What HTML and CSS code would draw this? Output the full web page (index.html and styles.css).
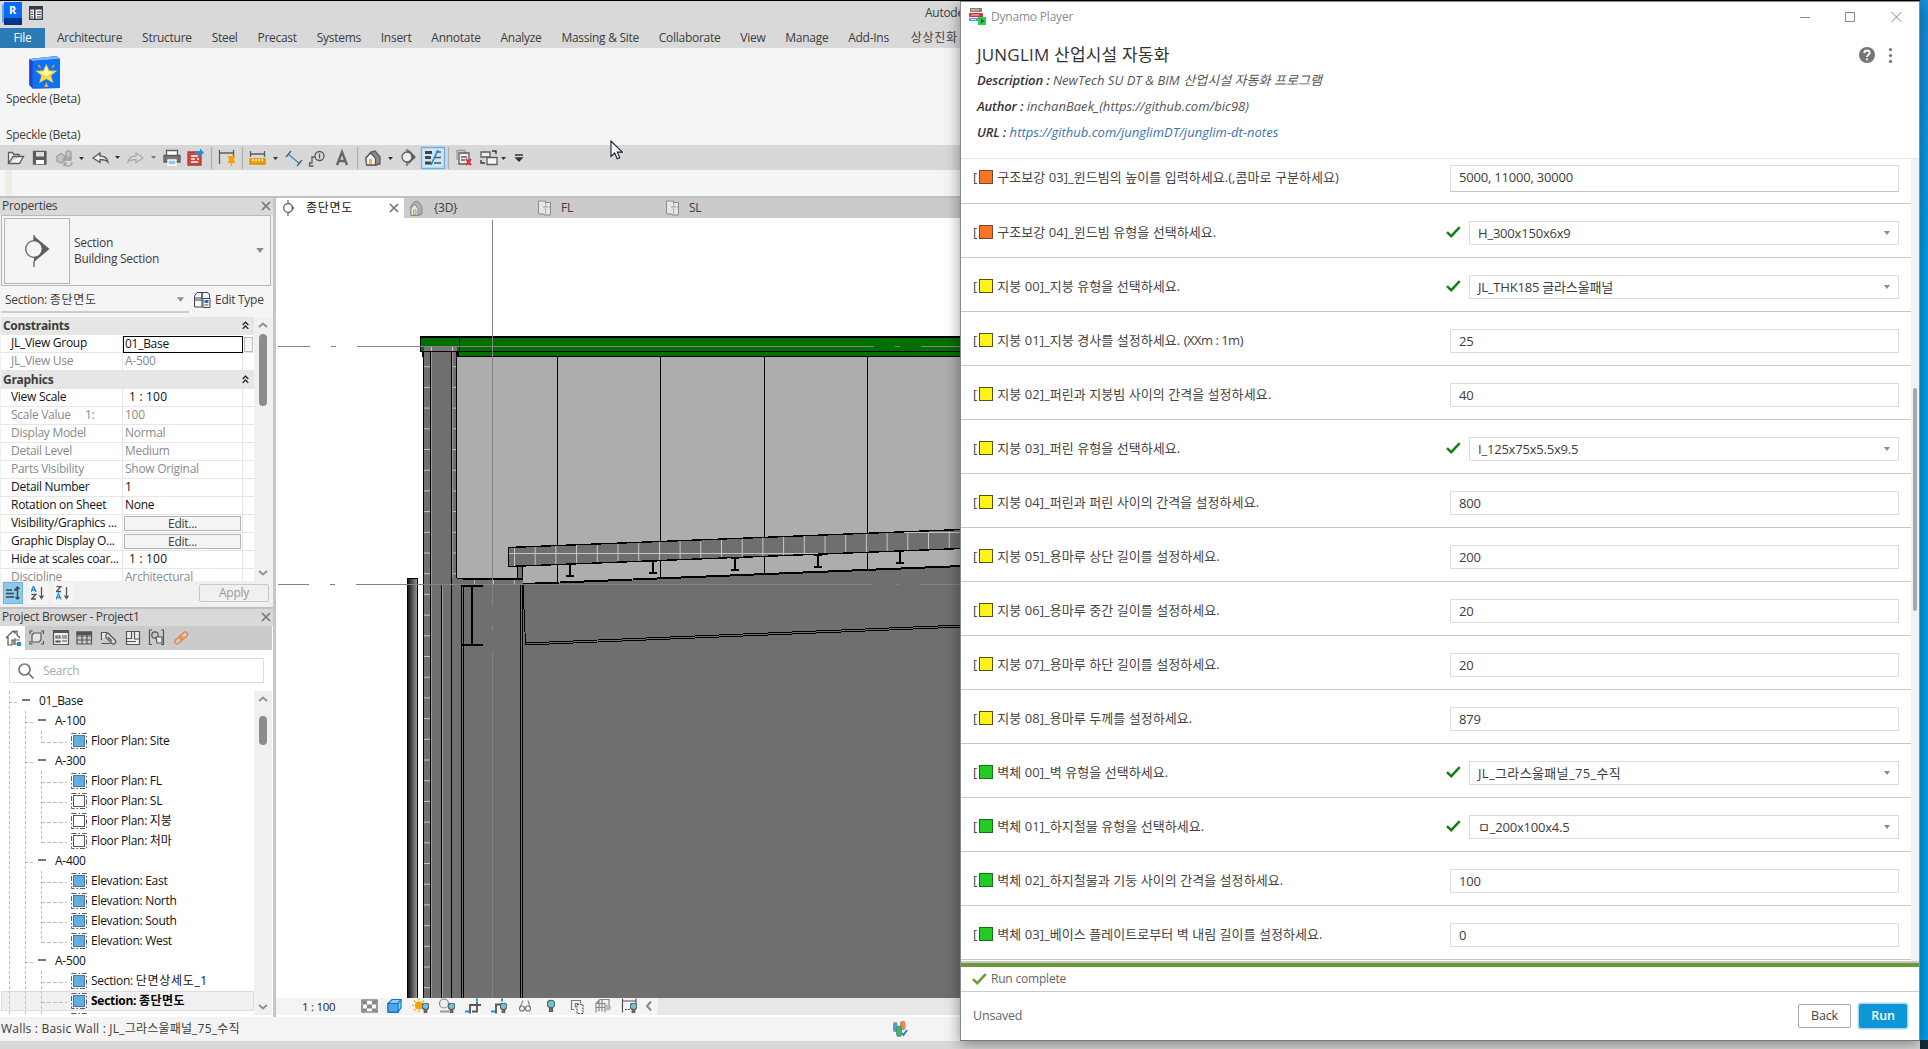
FILE: index.html
```html
<!DOCTYPE html>
<html lang="ko">
<head>
<meta charset="utf-8">
<title>Autodesk Revit - Dynamo Player</title>
<link rel="stylesheet" href="styles.css">
</head>
<body>
<svg width="0" height="0" class="defs">
  <defs>
    <symbol id="check" viewBox="0 0 15 12"><path d="M1 6.2 5.2 10.2 13.7 1.2" fill="none" stroke="currentColor" stroke-width="2.5"/></symbol>
    <symbol id="caret" viewBox="0 0 6 4"><path d="M0 0h6L3 4z" fill="currentColor"/></symbol>
    <symbol id="close" viewBox="0 0 10 10"><path d="M1 1l8 8M9 1l-8 8" stroke="currentColor" stroke-width="1.7"/></symbol>
    <symbol id="up" viewBox="0 0 10 6"><path d="M1 5l4-3.5L9 5" fill="none" stroke="#8f8f8f" stroke-width="1.8"/></symbol>
    <symbol id="down" viewBox="0 0 10 6"><path d="M1 1l4 3.5L9 1" fill="none" stroke="#8f8f8f" stroke-width="1.8"/></symbol>
    <symbol id="chev" viewBox="0 0 6 8"><path d="M.5 3.5 3 1l2.500 2.500M.5 7 3 4.500 5.500 7" fill="none" stroke="#222" stroke-width="1.200"/></symbol>
    <symbol id="sheet-on" viewBox="0 0 16 16"><rect x=".5" y=".5" width="15" height="15" fill="none" stroke="#5c5c5c" stroke-dasharray="5 2 1.500 2"/><rect x="2.500" y="2.500" width="11" height="11" fill="#62aee3" stroke="#48799c"/></symbol>
    <symbol id="sheet-off" viewBox="0 0 16 16"><rect x=".5" y=".5" width="15" height="15" fill="none" stroke="#5c5c5c" stroke-dasharray="5 2 1.500 2"/><rect x="2.500" y="2.500" width="11" height="11" fill="#fff" stroke="#555"/></symbol>
    <symbol id="section" viewBox="0 0 12 16"><path d="M5 0v16" stroke="#666" stroke-width="1.200"/><path d="M6 2.500 11.500 8 6 13.500z" fill="#5f5f5f"/><circle cx="5" cy="8" r="4.300" fill="#fff" stroke="#5f5f5f" stroke-width="1.300"/></symbol>
    <symbol id="house" viewBox="0 0 14 16"><path d="M1 8 5 2l4-1 4 6v7l-4 1.500H2V8z" fill="#b0b0b0" stroke="#888"/><path d="M2 8.500 5.500 4 9 8.500v7H2z" fill="#e6e6e6" stroke="#888"/><path d="M4.500 10h2.500v5H4.500z" fill="#e9d28a" stroke="#888" stroke-width=".6"/></symbol>
    <symbol id="planicon" viewBox="0 0 18 16"><path d="M2.500 1h7v1.500h5v12.500H8V14H2.500z" fill="#e6e6e6" stroke="#8c8c8c"/><path d="M9.500 2.500v12M7 7h7" stroke="#999" fill="none" stroke-dasharray="2 1"/></symbol>
    <symbol id="bulb" viewBox="0 0 8 12"><circle cx="4" cy="4" r="3.800" fill="#6cc5d6"/><path d="M2.500 8h3v3.500h-3z" fill="#777"/></symbol>
  </defs>
</svg>

<div class="desktop">
  <div class="revit">
    <div class="titlebar">
      <svg class="logo" width="20" height="23" viewBox="0 0 20 23"><path d="M0 3 4 0v19L0 21z" fill="#5da2f0"/><path d="M2 0h18v16H2z" fill="#0b6af2"/><path d="M2 16h18v7H2z" fill="#05348b"/></svg>
      <b class="logo-r">R</b>
      <svg width="14" height="14" viewBox="0 0 14 14"><rect x=".7" y=".7" width="12.600" height="12.600" fill="#f5f5f5" stroke="#333b48" stroke-width="1.400"/><path d="M0 0h14v3.500H0zM5 3h1.500v10H5z" fill="#333b48"/><path d="M2 6h2M2 8.500h2M2 11h2M8 6h4M8 8.500h4M8 11h4" stroke="#333b48"/></svg>
      <span class="app-title">Autode</span>
    </div>
    <div class="tabs">
      <span class="file">File</span><span>Architecture</span><span>Structure</span><span>Steel</span><span>Precast</span><span>Systems</span><span>Insert</span><span>Annotate</span><span>Analyze</span><span>Massing &amp; Site</span><span>Collaborate</span><span>View</span><span>Manage</span><span>Add-Ins</span><span class="ko">상상진화</span>
    </div>
    <div class="ribbon">
      <div class="ribbon-btn">
        <svg width="32" height="33" viewBox="0 0 28 33" preserveAspectRatio="none"><path d="M1 3 25 0l3 3v29l-24 .5L1 29z" fill="#2a3fd0"/><path d="M1 3 25 0l3 3-24 2z" fill="#6fb8f5"/><path d="M4 5 28 3v29l-24 .5z" fill="#0b72f5"/><path d="m16 8 2.600 6.500 7 .3-5.400 4.600 2 7.600-6.200-4-6.200 4 2-7.600-5.400-4.600 7-.3z" fill="#ffd83c"/><path d="m16 10 1.800 5.500 4 .5-5.800 4-5.800-4 4-.5z" fill="#fff7b8"/><path d="m9 8 3 4-3-1zM23 8l-3 4 3-1zM16 26l2 5h-4z" fill="#f5a623"/></svg>
        <span>Speckle (Beta)</span>
      </div>
      <div class="ribbon-panel">Speckle (Beta)</div>
    </div>
    <div class="qat">
      <svg width="360" height="25" viewBox="0 145 360 25" fill="none" stroke="#5c5c5c" stroke-width="1.300">
        <path d="M8.500 163.500v-11h4l1.500 2h5v2.500M8.500 163.500h11l4-7H13z" fill="#f4f4f4"/>
        <path d="M33.500 151.500h12.500v12.500h-12.500z" fill="#5c5c5c"/><path d="M36 152h8v4.500h-8z" fill="#ddd" stroke="none"/><path d="M36 160h8v4h-8z" fill="#fff" stroke="none"/>
        <g stroke="#a0a0a0" fill="#c4c4c4"><path d="m57 156 4-2.500 4 2.500v5l-4 2-4-2zM66 152l2.500-1.500 2.500 1.500v8h-5z"/><path d="M63 161a4 4 0 0 1 7.500-2M72 162a4 4 0 0 1-7.500 2M70.500 156.500v3h-3M64 166.500v-3h3" fill="none"/></g>
        <path d="M79 157h5l-2.500 3zM115 156h5l-2.500 3zM273 157h5l-2.500 3z" fill="#333" stroke="none"/>
        <path d="m93 158 7-5v3c5 0 7 2 8 6-2-2-4-2.500-8-2.500v3z" fill="#f1f1f1"/>
        <path d="m143 158-7-5v3c-5 0-7 2-8 6 2-2 4-2.500 8-2.500v3z" fill="#dedede" stroke="#aaa"/><path d="M151 156h5l-2.500 3z" fill="#777" stroke="none"/>
        <path d="M166.500 155v-4.500h11v4.500" fill="#fff"/><path d="M164 155.500h16v6.500h-16z" fill="#777"/><path d="M168 160h8v5h-8z" fill="#8ccbf0" stroke="#fff"/>
        <path d="M188 152h13v13h-13z" fill="#d04a44" stroke="#b23a36"/><path d="M191 156h7M191 159h4M197 159h2M191 162h7" stroke="#fff"/><path d="M195 151h5v-2.500l4 4-4 4V154h-5z" fill="#1e8fe0" stroke="none"/>
        <path d="M211.500 147v22M242.500 147v22M357.500 147v22" stroke="#b0b0b0"/>
        <path d="M219.500 150v14M233.500 150v6M219 153h14"/><path d="M228 157h7M228 162h7" stroke="#f5a300" stroke-width="2"/><path d="M229.500 157h4v5h-4zM231.500 162v4" fill="#f5a300" stroke="#f5a300"/>
        <path d="M250.500 151v6M264.500 151v6M250 154h15"/><path d="M250 159h15v5h-15z" fill="#f5a300" stroke="#d98e00"/><path d="M253 159v2M256 159v2M259 159v2M262 159v2" stroke="#fff"/>
        <path d="m288 154 12 10" stroke="#1e8fe0"/><path d="m286 157 5-6M297 166l5-6"/>
        <circle cx="319.500" cy="156" r="4.500"/><path d="M319.500 153.500v5M315 157h-3v6h-2.500v3h4"/>
        <path d="m337 165 5-13 5 13M339 161h6" stroke-width="2.400" stroke="#666"/>
      </svg>
      <svg width="170" height="25" viewBox="360 145 170 25" fill="none" stroke="#5c5c5c" stroke-width="1.300">
        <path d="m366 158 5-6 4-1 5 6v7l-4 1h-9z" fill="#8c8c8c"/><path d="m366 158 4.500-5 5 5v7h-9z" fill="#f3f3f3"/><path d="M369 159h3v5h-3z" fill="#e9b83a" stroke="none"/>
        <path d="M388 157h5l-2.500 3zM501 157h5l-2.500 3z" fill="#333" stroke="none"/>
        <path d="M407 149v3M407 161v5"/><path d="m409 151 6 6-6 6z" fill="#5c5c5c"/><circle cx="407" cy="157" r="5" fill="#eee"/>
        <path d="M421.500 147.500h23v21h-23z" fill="#cfe5f3" stroke="#67b3e3"/><path d="M425 152.500h7M425 157.500h6M425 163h6" stroke-width="3" stroke="#444"/><path d="M436 152h5M435 157.500h6M434 163h7" stroke="#555"/><path d="m438 150-7 15" stroke="#1e8fe0" stroke-width="1.700"/>
        <path d="M448.500 147v22" stroke="#b0b0b0"/>
        <path d="M457 150.500h8v12h-2M457 150v10" stroke="#999"/><path d="M459 153h10v11h-10z" fill="#eee"/><path d="M461 157h6M461 160h4"/><path d="m466 159 5 6M471 159l-5 6" stroke="#e03131" stroke-width="2"/>
        <path d="M481 152h9v5h-9z" fill="#eee"/><path d="M487 157.500h10v7h-10z" fill="#f5f5f5"/><path d="M492 151h4v3M481 160v3h4" stroke="#333"/>
        <path d="M515 155h8M516 158h6l-3 3z" fill="#333" stroke="#333"/>
      </svg>
    </div>
    <div class="options"><i></i></div>

    <div class="work">
      <div class="left">
        <section class="props">
          <header class="pane-head"><span>Properties</span><svg width="10" height="10"><use href="#close"/></svg></header>
          <div class="type">
            <div class="preview"><svg width="26" height="32" viewBox="0 0 26 32"><path d="M9 0v5M9 26v6" stroke="#5f5f5f" stroke-width="1.300"/><path d="M9 1 24.500 14 9 27z" fill="#5f5f5f"/><circle cx="9" cy="14" r="8.300" fill="#f5f5f5" stroke="#5f5f5f" stroke-width="1.300"/></svg></div>
            <div class="type-name">Section<br>Building Section</div>
            <svg class="gcaret" width="8" height="5"><use href="#caret"/></svg>
          </div>
          <div class="filter">
            <div class="combo"><span>Section: <span class="ko">종단면도</span></span><svg class="gcaret" width="7" height="5"><use href="#caret"/></svg></div>
            <svg width="17" height="16" viewBox="0 0 17 16" fill="none" stroke="#3c4655"><path d="M.5 4 3 .5h5V6H.5zM8 .5h5L15.500 2v5M8 .5V15H.5V8H8M.5 4v4"/><path d="M9 6.500h7v9H9z" fill="#fff"/><path d="M10.500 8h4v3h-4z" fill="#1e6fd0" stroke="none"/><path d="M10.500 13h4"/></svg>
            <span>Edit Type</span>
          </div>
          <div class="grid-wrap">
            <div class="ptable">
              <div class="cat"><b>Constraints</b><svg width="7" height="9"><use href="#chev"/></svg></div>
              <div class="prow"><span>JL_View Group</span><span class="editing">01_Base</span><span><i class="mini"></i></span></div>
              <div class="prow off"><span>JL_View Use</span><span>A-500</span><span></span></div>
              <div class="cat"><b>Graphics</b><svg width="7" height="9"><use href="#chev"/></svg></div>
              <div class="prow"><span>View Scale</span><span class="ind">1 : 100</span><span></span></div>
              <div class="prow off"><span>Scale Value&nbsp;&nbsp;&nbsp;&nbsp; 1:</span><span>100</span><span></span></div>
              <div class="prow off"><span>Display Model</span><span>Normal</span><span></span></div>
              <div class="prow off"><span>Detail Level</span><span>Medium</span><span></span></div>
              <div class="prow off"><span>Parts Visibility</span><span>Show Original</span><span></span></div>
              <div class="prow"><span>Detail Number</span><span>1</span><span></span></div>
              <div class="prow"><span>Rotation on Sheet</span><span>None</span><span></span></div>
              <div class="prow"><span>Visibility/Graphics ...</span><span><em class="edit">Edit...</em></span><span></span></div>
              <div class="prow"><span>Graphic Display O...</span><span><em class="edit">Edit...</em></span><span></span></div>
              <div class="prow"><span>Hide at scales coar...</span><span class="ind">1 : 100</span><span></span></div>
              <div class="prow off"><span>Discipline</span><span>Architectural</span><span></span></div>
            </div>
            <div class="sbar"><svg width="10" height="6"><use href="#up"/></svg><i class="thumb t1"></i><svg width="10" height="6"><use href="#down"/></svg></div>
          </div>
          <div class="props-foot">
            <i class="sq on"><svg width="14" height="14" viewBox="0 0 14 14" fill="none" stroke="#444" stroke-width="1.400"><path d="M0 4h6M0 7.500h8M0 11h8M8 4h3M11.500 1v12M9.500 3l2-2 2 2M9.500 11l2 2 2-2"/></svg></i>
            <i class="sq"><svg width="14" height="14" viewBox="0 0 14 14" fill="none" stroke-width="1.300"><path d="m0 6 2.500-6L5 6M1 4h3" stroke="#1e8fe0"/><path d="M.5 8.500H5L.5 13H5M10.500 1v11M8.500 9.500l2 3 2-3" stroke="#555"/></svg></i>
            <i class="sq"><svg width="14" height="14" viewBox="0 0 14 14" fill="none" stroke-width="1.300"><path d="M.5.500H5L.5 5.500H5" stroke="#555"/><path d="m0 13.500 2.500-6L5 13.500M1 11.500h3" stroke="#1e8fe0"/><path d="M10.500 1v11M8.500 9.500l2 3 2-3" stroke="#555"/></svg></i>
            <span class="apply">Apply</span>
          </div>
        </section>

        <section class="browser">
          <header class="pane-head"><span>Project Browser - Project1</span><svg width="10" height="10"><use href="#close"/></svg></header>
          <div class="btabs">
            <svg width="200" height="24" viewBox="1 626 200 24" fill="none" stroke="#555" stroke-width="1.200">
              <path d="M1 626h24v24H1z" fill="#fff" stroke="none"/>
              <path d="m6 638 7-7 2 2v-2h2v4l3 3M8 637v8h4v-5h2v5"/><path d="M15 638v7M15 640h5M15 644h5" stroke="#8a7030"/><path d="M17 642h4v4h-4z" fill="#1e8fe0" stroke="none"/>
              <path d="M32.500 631H30v3M41 631h2.500v3M30 641v3h2.500M43.500 641v3H41"/><path d="M32 635l2-2h7v7l-2 2h-7z" fill="#e5e5e5"/>
              <path d="M53.500 630.500h15v14h-15z" fill="#eee"/><path d="M54 632h14" stroke-width="2"/><path d="M56 636h4v2h-4zM56 641h4v1h-4zM62 636h5M62 638h5M62 641h5"/>
              <path d="M77 632h14.500v12H77zM77 636h14M77 640h14M82 632v12M87 632v12"/><path d="M77 632h14.500v2.500H77z" fill="#555"/>
              <path d="M101.500 640v-7.500h5l2 1.500M101.500 643.500h9" fill="#eee"/><path d="m108 633 7.500 7.500c1.500 2-1.500 4.500-3.500 3l-6-6c-1-2 .5-4.500 2-4.500zM108 637l4 4" fill="#ddd"/>
              <path d="M126.500 631.500h13v13h-13z" fill="#eee"/><path d="M131.500 631.500v7h-5M134.500 632v7h5M127 641.500h9"/>
              <path d="M152 630h-2.500v14.500h2.500M161 630h2.500v14.500H161"/><circle cx="155" cy="635" r="3.200"/><path d="M156 637h6v6h-5z" fill="#eee"/>
              <g stroke="#e8833a" stroke-width="1.300" transform="rotate(-42 181 638)"><rect x="173.500" y="635.800" width="9" height="4.600" rx="2.300"/><rect x="180" y="635.800" width="9" height="4.600" rx="2.300"/></g>
            </svg>
          </div>
          <div class="search"><svg width="16" height="16" viewBox="0 0 16 16" fill="none" stroke="#777" stroke-width="1.700"><circle cx="6.500" cy="6.500" r="5.500"/><path d="m10.500 10.500 5 5"/></svg><span>Search</span></div>
          <div class="tree-wrap">
            <div class="tree">
              <div class="trow"><i class="g h"></i><i class="minus"></i><span>01_Base</span></div>
              <div class="trow"><i class="g"></i><i class="g h"></i><i class="minus"></i><span>A-100</span></div>
              <div class="trow"><i class="g"></i><i class="g"></i><i class="g leaf last"></i><svg width="16" height="16"><use href="#sheet-on"/></svg><span>Floor Plan: Site</span></div>
              <div class="trow"><i class="g"></i><i class="g h"></i><i class="minus"></i><span>A-300</span></div>
              <div class="trow"><i class="g"></i><i class="g"></i><i class="g leaf"></i><svg width="16" height="16"><use href="#sheet-on"/></svg><span>Floor Plan: FL</span></div>
              <div class="trow"><i class="g"></i><i class="g"></i><i class="g leaf"></i><svg width="16" height="16"><use href="#sheet-off"/></svg><span>Floor Plan: SL</span></div>
              <div class="trow"><i class="g"></i><i class="g"></i><i class="g leaf"></i><svg width="16" height="16"><use href="#sheet-off"/></svg><span>Floor Plan: 지붕</span></div>
              <div class="trow"><i class="g"></i><i class="g"></i><i class="g leaf last"></i><svg width="16" height="16"><use href="#sheet-off"/></svg><span>Floor Plan: 처마</span></div>
              <div class="trow"><i class="g"></i><i class="g h"></i><i class="minus"></i><span>A-400</span></div>
              <div class="trow"><i class="g"></i><i class="g"></i><i class="g leaf"></i><svg width="16" height="16"><use href="#sheet-on"/></svg><span>Elevation: East</span></div>
              <div class="trow"><i class="g"></i><i class="g"></i><i class="g leaf"></i><svg width="16" height="16"><use href="#sheet-on"/></svg><span>Elevation: North</span></div>
              <div class="trow"><i class="g"></i><i class="g"></i><i class="g leaf"></i><svg width="16" height="16"><use href="#sheet-on"/></svg><span>Elevation: South</span></div>
              <div class="trow"><i class="g"></i><i class="g"></i><i class="g leaf last"></i><svg width="16" height="16"><use href="#sheet-on"/></svg><span>Elevation: West</span></div>
              <div class="trow"><i class="g"></i><i class="g h"></i><i class="minus"></i><span>A-500</span></div>
              <div class="trow"><i class="g"></i><i class="g"></i><i class="g leaf"></i><svg width="16" height="16"><use href="#sheet-on"/></svg><span>Section: <span class="ko">단면상세도_1</span></span></div>
              <div class="trow sel"><i class="g"></i><i class="g"></i><i class="g leaf"></i><svg width="16" height="16"><use href="#sheet-on"/></svg><span>Section: <span class="ko">종단면도</span></span></div>
              <div class="trow"><i class="g"></i><i class="g"></i><i class="g leaf"></i><svg width="16" height="16"><use href="#sheet-on"/></svg></div>
            </div>
            <div class="sbar"><svg width="10" height="6"><use href="#up"/></svg><i class="thumb t2"></i><svg width="10" height="6"><use href="#down"/></svg></div>
          </div>
        </section>
      </div>

      <div class="view">
        <div class="vtabs">
          <div class="vtab active"><svg width="12" height="16"><use href="#section"/></svg><span class="ko">종단면도</span><svg class="x" width="10" height="10"><use href="#close"/></svg></div>
          <div class="vtab"><svg width="16" height="16"><use href="#house"/></svg><span>&nbsp;{3D}</span></div>
          <div class="vtab"><svg width="18" height="16"><use href="#planicon"/></svg><span>FL</span></div>
          <div class="vtab"><svg width="18" height="16"><use href="#planicon"/></svg><span>SL</span></div>
        </div>
        <svg class="drawing" width="686" height="780" viewBox="276 218 686 780" shape-rendering="crispEdges">
          <defs>
            <linearGradient id="pipe"><stop offset="0" stop-color="#111"/><stop offset=".9" stop-color="#8c8c8c"/></linearGradient>
            <pattern id="ticks" x="0" y="346.500" width="40" height="20.700" patternUnits="userSpaceOnUse"><path d="M0 20h40" stroke="#c4c4c4" stroke-width="1.200"/></pattern>
            <pattern id="seams" x="514" y="0" width="20.700" height="40" patternUnits="userSpaceOnUse"><path d="M.5 0v40" stroke="#c8c8c8" stroke-width="1"/></pattern>
          </defs>
          <path d="M457 357H962V640H457z" fill="#adadad"/>
          <path d="M557.500 357V600M660.500 357V600M764.500 357V600M867.500 357V600" stroke="#000"/>
          <path d="M451 584H523L962 566V998H451z" fill="#6f6f6f"/>
          <path d="M451 579h72v6h-72z" fill="#6f6f6f"/><path d="M474.500 580v5M493.500 580v5M514.500 580v5" stroke="#bbb"/>
          <path d="M451 578.500h72" stroke="#000" stroke-width="2"/>
          <path d="M517 566h5.500v12H517z" fill="#6f6f6f" stroke="#000"/>
          <path d="M508.500 547.500 962 529.500V548.500L508.500 566.500z" fill="#6f6f6f"/>
          <path d="M508.500 547.500 962 529.500V548.500L508.500 566.500z" fill="url(#seams)"/>
          <path d="M509 553.500H850M880 532.500H962" stroke="#c4c4c4"/>
          <path d="M962 529.500 508.500 547.500V566.500L962 548.500" fill="none" stroke="#000" stroke-width="1.400"/>
          <g stroke="#000"><path d="M570 564v12M566 564h8M566 576h8M653 561v12M649 561h8M649 573h8M735 558v12M731 558h8M731 570h8M818 555v12M814 555h8M814 567h8M900 551v12M896 551h8M896 563h8" stroke-width="2"/></g>
          <path d="M523 583.500 962 565.500M523 584.500 962 566.500M525 643 962 625M525 645 962 627M523 585 525.500 644" fill="none" stroke="#000"/>
          <path d="M423 346h34v652h-34z" fill="#6f6f6f"/>
          <path d="M451 579h12v419h-12z" fill="#6f6f6f"/>
          <path d="M424 352h6v646h-6zM453 352h4v226h-4z" fill="url(#ticks)"/>
          <path d="M431.500 346V998M452.500 352V578M442.500 585V998" stroke="#999"/>
          <path d="M423.500 346V998M430.500 352V998M451.500 352V998M456.500 352V578M441.500 585V998M461.500 585V998M463.500 585V998M520.500 585V998M522.500 585V998" stroke="#000"/>
          <path d="M461 585.500h22M461 644.500h22M472 585v59" stroke="#000" stroke-width="2"/>
          <path d="M407.500 578.500h10V998h-10z" fill="url(#pipe)" stroke="#000"/>
          <path d="M458 337H962v19.500H458z" fill="#007000" stroke="#000"/>
          <path d="M420.500 336.500h39v15h-39z" fill="#007000" stroke="#000"/>
          <path d="M424 346h33v5h-33z" fill="#777"/><path d="M431.500 346v5M452.500 346v5" stroke="#ccc"/>
          <path d="M421 337H962" stroke="#000" stroke-width="2"/><path d="M421 351.500H962M422.500 352v5M457 352v5" stroke="#000"/>
          <path d="M278 346.500H310M331 346.500h5M357 346.500H874M895 346.500h5M921 346.500H962M278 584.500h31M330 584.500h5M356 584.500H873M895 584.500h4M920 584.500H962M492.500 220V605M492.500 626v5M492.500 652V998" stroke="#848484"/>
        </svg>
        <div class="vcbar">
          <span>1 : 100</span>
          <svg width="300" height="17" viewBox="358 997.500 300 17" fill="none" stroke="#555" stroke-width="1.200">
            <path d="M362 999.500h15v12h-15z" fill="#fff"/><path d="M363 1000h4v4h-4zM372 1000h4v4h-4zM367 1004h5v4h-5zM363 1008h4v3h-4zM372 1008h4v3h-4z" fill="#888" stroke="none"/>
            <path d="M388 1003l4-4h9v8l-3 5h-10z" fill="#8fcaf5" stroke="#1277cc"/><path d="M388 1003h10v8.500h-10z" fill="#4da7ea" stroke="#1277cc"/><path d="m398 1003 3-4" stroke="#1277cc"/>
            <circle cx="419" cy="1005" r="4" fill="#f5a300" stroke="none"/><path d="M419 998v2M419 1010v2M412 1005h2M414 1000l1.500 1.500M424 1000l-1.500 1.500M414 1010l1.500-1.500" stroke="#f5a300"/>
            <circle cx="444" cy="1003" r="4.500" fill="#eee" stroke="#888"/><path d="M440 1011h9" stroke="#999" stroke-width="2"/>
            <path d="M470 1013v-8.500h11M472 1011h5v-9.500" stroke-width="1.800"/><path d="M465 1011h4M477 1001v-3" stroke="#1e8fe0" stroke-width="2"/>
            <path d="M496 1013v-9h9" stroke-width="1.800"/><path d="M491 1011h4M502 1001v-3" stroke="#1e8fe0" stroke-width="2"/>
            <path d="m520 1007 3-7M530 1007l-2-7" stroke="#888"/><g stroke="#777"><circle cx="522" cy="1008" r="2.500"/><circle cx="528" cy="1008" r="2.500"/></g>
            <path d="M580.500 1003v-3h-9v9h3M575.500 1007v-4h3" stroke="#777"/><path d="M577 1004h6v9h-6z" stroke-dasharray="2 1"/>
            <path d="M596 1012v-9l4-4h9v9M596 1003h9v9M599 999v12M602 999v12M596 1007h13" stroke="#888"/><circle cx="608" cy="1007" r="3" fill="#bbb" stroke="none"/>
            <path d="M622.500 998v14M636 998v5M622 1000.500h14"/><path d="M625 1009h5" stroke-dasharray="2 1"/>
            <path d="m651 1001-4 4.500 4 4.500" stroke="#888" stroke-width="2"/>
            <svg x="422" y="1002" width="7" height="11"><use href="#bulb"/></svg><svg x="448" y="1002" width="7" height="11"><use href="#bulb"/></svg><svg x="500" y="1002" width="7" height="11"><use href="#bulb"/></svg><svg x="547" y="999" width="8" height="13"><use href="#bulb"/></svg><svg x="630" y="1002" width="7" height="11"><use href="#bulb"/></svg>
          </svg>
        </div>
      </div>
    </div>

    <div class="status">
      <span>Walls : Basic Wall : JL_그라스울패널_75_수직</span>
      <svg width="16" height="16" viewBox="0 0 16 16"><rect x="1" y="1" width="4.500" height="10" rx="2" fill="#5a9ad5"/><rect x="8" y="0" width="5.500" height="9" rx="2" fill="#e08a5a"/><rect x="4.500" y="5" width="5" height="10.500" rx="2" fill="#45b36b" stroke="#2b8a4d" stroke-width=".6"/><path d="m10 12 1.500 2L15 9" fill="none" stroke="#1e7fd0" stroke-width="1.800"/></svg>
    </div>
    <div class="below"></div>
  </div>
  <div class="wallpaper"></div>
</div>

<svg class="cursor" width="13" height="20" viewBox="0 0 13 20"><path d="M1 1v15.500l3.700-3.500 2.500 5.800 2.600-1.100-2.500-5.600h5z" fill="#fff" stroke="#15202b" stroke-width="1.100"/></svg>

<div class="dynamo">
  <div class="d-title">
    <svg width="17" height="17" viewBox="0 0 17 17"><path d="M1 0h12v4H1z" fill="#8d8468"/><path d="M0 5h14v4H0z" fill="#d8393c"/><path d="M0 10h10v3H0z" fill="#57a0d5"/><path d="M2 2h8M2 7h8M2 11.500h5" stroke="#fff" stroke-width=".7"/><path d="M9 9h8v8H9z" fill="#2dcb53"/><path d="m12 10.500 3 2.500-3 2.500z" fill="#0b5a22"/></svg>
    <span>Dynamo Player</span>
    <svg class="winbtns" width="103" height="12" viewBox="0 0 103 12" fill="none" stroke="#888"><path d="M0 6.500h10M45.500 1.500h9v9h-9zM91.500 1l10 10M101.500 1l-10 10"/></svg>
  </div>
  <div class="d-head">
    <div class="d-name"><h1>JUNGLIM 산업시설 자동화</h1>
      <svg width="35" height="16" viewBox="0 0 35 16"><circle cx="8" cy="8" r="8" fill="#757575"/><path d="M5.300 6.300C5.300 4.500 6.500 3.500 8 3.500s2.700 1 2.700 2.500C10.700 7.800 8 8 8 10M8 11.500v1.800" fill="none" stroke="#fff" stroke-width="1.800"/><g fill="#757575"><circle cx="31.500" cy="2.500" r="1.600"/><circle cx="31.500" cy="8.500" r="1.600"/><circle cx="31.500" cy="14.400" r="1.600"/></g></svg>
    </div>
    <p><b>Description :</b> NewTech SU DT &amp; BIM 산업시설 자동화 프로그램</p>
    <p><b>Author :</b> inchanBaek_(https://github.com/bic98)</p>
    <p><b>URL :</b> <a>https://github.com/junglimDT/junglim-dt-notes</a></p>
  </div>
  <div class="d-body">
    <div class="d-list">
      <div class="drow first"><label>[<i class="sw or"></i>구조보강 03]_윈드빔의 높이를 입력하세요.(,콤마로 구분하세요)</label><div class="inp">5000, 11000, 30000</div></div>
      <div class="drow"><label>[<i class="sw or"></i>구조보강 04]_윈드빔 유형을 선택하세요.</label><svg class="ok" width="15" height="12"><use href="#check"/></svg><div class="inp dd">H_300x150x6x9<svg width="6" height="4"><use href="#caret"/></svg></div></div>
      <div class="drow"><label>[<i class="sw ye"></i>지붕 00]_지붕 유형을 선택하세요.</label><svg class="ok" width="15" height="12"><use href="#check"/></svg><div class="inp dd">JL_THK185 글라스울패널<svg width="6" height="4"><use href="#caret"/></svg></div></div>
      <div class="drow"><label>[<i class="sw ye"></i>지붕 01]_지붕 경사를 설정하세요. <span class="unit">(XXm : 1m)</span></label><div class="inp">25</div></div>
      <div class="drow"><label>[<i class="sw ye"></i>지붕 02]_퍼린과 지붕빔 사이의 간격을 설정하세요.</label><div class="inp">40</div></div>
      <div class="drow"><label>[<i class="sw ye"></i>지붕 03]_퍼린 유형을 선택하세요.</label><svg class="ok" width="15" height="12"><use href="#check"/></svg><div class="inp dd">I_125x75x5.5x9.5<svg width="6" height="4"><use href="#caret"/></svg></div></div>
      <div class="drow"><label>[<i class="sw ye"></i>지붕 04]_퍼린과 퍼린 사이의 간격을 설정하세요.</label><div class="inp">800</div></div>
      <div class="drow"><label>[<i class="sw ye"></i>지붕 05]_용마루 상단 길이를 설정하세요.</label><div class="inp">200</div></div>
      <div class="drow"><label>[<i class="sw ye"></i>지붕 06]_용마루 중간 길이를 설정하세요.</label><div class="inp">20</div></div>
      <div class="drow"><label>[<i class="sw ye"></i>지붕 07]_용마루 하단 길이를 설정하세요.</label><div class="inp">20</div></div>
      <div class="drow"><label>[<i class="sw ye"></i>지붕 08]_용마루 두께를 설정하세요.</label><div class="inp">879</div></div>
      <div class="drow"><label>[<i class="sw gr"></i>벽체 00]_벽 유형을 선택하세요.</label><svg class="ok" width="15" height="12"><use href="#check"/></svg><div class="inp dd kor">JL_그라스울패널_75_수직<svg width="6" height="4"><use href="#caret"/></svg></div></div>
      <div class="drow"><label>[<i class="sw gr"></i>벽체 01]_하지철물 유형을 선택하세요.</label><svg class="ok" width="15" height="12"><use href="#check"/></svg><div class="inp dd">ㅁ_200x100x4.5<svg width="6" height="4"><use href="#caret"/></svg></div></div>
      <div class="drow"><label>[<i class="sw gr"></i>벽체 02]_하지철물과 기둥 사이의 간격을 설정하세요.</label><div class="inp">100</div></div>
      <div class="drow"><label>[<i class="sw gr"></i>벽체 03]_베이스 플레이트로부터 벽 내림 길이를 설정하세요.</label><div class="inp">0</div></div>
    </div>
    <div class="d-scroll"><i></i></div>
  </div>
  <div class="d-run"><svg width="15" height="12"><use href="#check"/></svg><span>Run complete</span></div>
  <div class="d-foot"><span>Unsaved</span><button class="back">Back</button><button class="run">Run</button></div>
</div>
</body>
</html>
```
FILE: styles.css
```css
* { box-sizing: border-box; }
body {
  margin: 0; width: 1928px; height: 1049px; overflow: hidden; position: relative;
  font: 12px/18px "Open Sans", "Noto Sans CJK KR", sans-serif; letter-spacing: -0.28px; color: #3c3c3c;
  background: #000;
}
svg { display: block; flex: none; }
i, em { font-style: normal; flex: none; }
.defs { position: absolute; }
.ko { letter-spacing: 0.7px; }

.desktop { display: flex; height: 1049px; }
.revit { width: 1920px; flex: none; display: flex; flex-direction: column; border-top: 1px solid #000; background: #d9d9d9; }
.wallpaper { flex: 1; background: linear-gradient(#1590dc 0, #00a2ed 260px, #00a2ed 1040px, #14293a 1040px); }

.titlebar { height: 27px; display: flex; align-items: center; padding-left: 2px; padding-bottom: 3px; position: relative; }
.logo-r { position: absolute; left: 9px; top: 0; color: #fff; font-size: 11px; }
.titlebar svg + b + svg { margin-left: 7px; }
.app-title { margin-left: 882px; }
.tabs { height: 20px; display: flex; gap: 19.9px; line-height: 19px; white-space: nowrap; }
.tabs .file { width: 45px; margin-right: -8px; background: #2a7ab5; color: #fff; text-align: center; }
.tabs .ko { margin-left: 2px; }
.ribbon { height: 97px; background: #f5f5f5; padding: 8px 6px 0; }
.ribbon-btn { width: 76px; height: 70px; display: flex; flex-direction: column; }
.ribbon-btn svg { margin-left: 22px; margin-bottom: 1px; }
.qat { height: 25px; background: #d8d8d8; display: flex; }
.options { height: 28px; background: #f5f5f5; border-bottom: 2px solid #c0c0c0; padding-left: 5px; }
.options i { display: block; width: 7px; height: 26px; background: #ebeee0; }

.work { height: 819px; display: flex; background: #f4f4f4; }
.left { width: 276px; flex: none; border-right: 3px solid #c6c6c6; display: flex; flex-direction: column; }
.props { height: 411px; background: #f0f0f0; border-bottom: 2px solid #c0c0c0; }
.pane-head { height: 17px; flex: none; background: #d9d9d9; display: flex; justify-content: space-between; align-items: center; padding: 0 2px 1px; line-height: 16px; }
.pane-head svg { color: #777; }
.type { margin-left: 1px; width: 270px; height: 71px; border: 1px solid #b9b9b9; background: #f5f5f5; padding: 1px 6px 1px 2px; display: flex; align-items: center; }
.preview { width: 66px; height: 66px; border: 1px solid #b4b4b4; display: grid; place-items: center; padding-left: 2px; }
.type-name { flex: 1; margin-left: 4px; line-height: 16px; }
.gcaret { color: #8b8b8b; }
.filter { height: 31px; display: flex; align-items: center; background: #f5f5f5; padding-bottom: 3px; }
.combo { width: 188px; height: 25px; margin: 1px 5px 0 1px; padding: 0 5px 0 4px; border-bottom: 2px solid #ccc; display: flex; align-items: center; justify-content: space-between; }
.filter > span { margin-left: 4px; }
.grid-wrap { height: 264px; display: flex; margin-left: 1px; }
.ptable { width: 253px; overflow: hidden; background: #fff; }
.cat { height: 18px; line-height: 15px; background: #e6e6e6; display: flex; justify-content: space-between; align-items: center; padding: 0 5px 2px 2px; }
.prow { height: 18px; display: grid; grid-template-columns: 122px 120px 11px; line-height: 16px; color: #111; border-bottom: 1px solid #e6e6e6; white-space: nowrap; }
.prow > span { padding-left: 2px; border-right: 1px solid #e6e6e6; height: 17px; }
.prow > span:first-child { padding-left: 10px; }
.prow > span:last-child { border: 0; }
.prow.off { color: #8a8a8a; }
.prow .ind { padding-left: 6px; letter-spacing: 0.2px; }
.prow .editing { border: 1px solid #000; line-height: 14px; padding-left: 1px; margin-top: 1px; }
.mini { display: block; width: 9px; height: 15px; margin: 2px 0 0 -1px; border: 1px solid #bbb; background: #f5f5f5; }
.edit { display: block; width: 117px; height: 15px; margin: 1px 0 0 -1px; line-height: 13px; text-align: center; border: 1px solid #b4b4b4; background: #f5f5f5; color: #3c3c3c; }
.sbar { width: 18px; background: #f0f0f0; display: flex; flex-direction: column; align-items: center; padding: 5px 0; }
.sbar svg:last-child { margin-top: auto; }
.thumb { width: 8px; border-radius: 4px; background: #8c8c8c; }
.t1 { height: 72px; margin-top: 6px; }
.t2 { height: 29px; margin-top: 14px; }
.props-foot { height: 25px; display: flex; align-items: center; padding: 0 4px 2px 3px; gap: 5px; }
.sq { width: 20px; height: 22px; background: #f5f5f5; display: grid; place-items: center; }
.sq.on { background: #8ccbf0; border: 1px solid #6fb6df; }
.apply { margin-left: auto; width: 70px; height: 18px; line-height: 16px; text-align: center; border: 1px solid #c8c8c8; border-radius: 2px; color: #9a9a9a; }

.browser { flex: 1; background: #fff; display: flex; flex-direction: column; overflow: hidden; }
.btabs { height: 24px; background: #cbcbcb; margin: 0 1px; }
.search { width: 255px; height: 25px; margin: 8px 0 8px 9px; border: 1px solid #ddd; display: flex; align-items: center; gap: 9px; padding-left: 8px; color: #aaa; flex: none; }
.tree-wrap { display: flex; height: 324px; margin-left: 1px; overflow: hidden; }
.tree { width: 253px; overflow: hidden; color: #111; }
.trow { height: 20px; display: flex; align-items: center; padding-left: 8px; white-space: nowrap; }
.trow > span { line-height: 20px; margin-left: 4px; }
.trow.sel { font-weight: 700; color: #000; background: #f0f0f0; box-shadow: inset 0 0 0 1px #dcdcdc; }
.trow.sel .ko { letter-spacing: 0.4px; }
.g { width: 16px; height: 20px; background: repeating-linear-gradient(#bdbdbd 0 3px, transparent 3px 5px) left/1px 100% no-repeat; }
.g.h { background: repeating-linear-gradient(#bdbdbd 0 3px, transparent 3px 5px) left/1px 100% no-repeat, repeating-linear-gradient(90deg, #bdbdbd 0 3px, transparent 3px 5px) 0 11px/9px 1px no-repeat; }
.g.leaf { width: 30px; background: repeating-linear-gradient(#bdbdbd 0 3px, transparent 3px 5px) left/1px 100% no-repeat, repeating-linear-gradient(90deg, #bdbdbd 0 4px, transparent 4px 6px) 0 11px/26px 1px no-repeat; }
.g.leaf.last { background-size: 1px 12px, 26px 1px; background-position: 0 0, 0 11px; }
.minus { width: 8px; height: 2px; margin: 0 5px 2px -3px; background: #777; }

.view { width: 1644px; background: #fff; overflow: hidden; }
.vtabs { height: 20px; background: #cbcbcb; display: flex; }
.vtab { width: 128px; display: flex; align-items: center; padding-left: 4px; }
.vtab svg + span { margin-left: 7px; line-height: 20px; }
.vtab.active { background: #fff; padding-left: 7px; }
.vtab.active svg + span { margin-left: 11px; color: #111; }
.vtab .x { margin-left: auto; margin-right: 5px; color: #777; }
.vcbar { height: 17px; display: flex; background: linear-gradient(90deg, #f4f4f4 382px, #e8e8e8 382px); padding-left: 26px; line-height: 16px; align-items: center; }
.vcbar span { width: 56px; color: #222; font-size: 11.500px; }

.status { height: 24px; background: #f4f4f4; display: flex; align-items: center; padding-left: 1px; }
.status span { width: 891px; letter-spacing: 0.2px; }
.below { flex: 1; background: #d8d8d8; }
.cursor { position: absolute; left: 610px; top: 140px; }

.dynamo {
  position: absolute; left: 960px; top: 1px; width: 960px; height: 1040px; background: #fff;
  border: 1px solid #8a8a8a; border-bottom-color: #777; box-shadow: 0 3px 14px rgba(0,0,0,.42);
  display: flex; flex-direction: column; font-size: 13px; letter-spacing: -0.2px;
}
.d-title { height: 29px; display: flex; align-items: center; padding: 0 16px 0 8px; color: #8c8c8c; font-size: 12px; }
.d-title span { margin-left: 5px; }
.winbtns { margin-left: auto; }
.d-head { height: 128px; padding: 12px 25px 0 16px; border-bottom: 1px solid #e6e6e6; }
.d-name { display: flex; justify-content: space-between; align-items: center; height: 24px; }
h1 { margin: 0; font-size: 17px; font-weight: 400; line-height: 24px; color: #333; letter-spacing: 0.2px; }
.d-head p { margin: 0; height: 26px; line-height: 26px; font-style: italic; color: #555; font-size: 13px; letter-spacing: 0.03px; }
.d-head p b { color: #333; font-weight: 600; letter-spacing: -0.15px; }
.d-head a { color: #3873b3; }
.d-body { height: 804px; display: flex; border-bottom: 2px solid #c8c8c8; }
.d-list { width: 950px; overflow: hidden; }
.drow { height: 54px; display: flex; align-items: center; border-bottom: 1px solid #c8c8c8; padding: 4px 12px 0 12px; }
.drow.first { height: 45px; padding-top: 0; }
.drow label { flex: 1; display: flex; align-items: center; white-space: pre; color: #444; letter-spacing: 0.05px; padding-bottom: 2px; }
.unit { letter-spacing: -0.5px; }
.drow.first label { padding-bottom: 9px; }
.sw { width: 14px; height: 14px; margin: 1px 4px 0 2px; border: 1px solid #222; }
.or { background: #fb7426; border-color: #6b4a38; }
.ye { background: #fff11a; border-color: #55531a; }
.gr { background: #23cc25; border-color: #15701a; }
.ok { color: #128018; margin: -2px 8px 0 0; }
.inp { width: 449px; height: 24px; line-height: 22px; border: 1px solid #dcdcdc; padding-left: 8px; color: #3c3c3c; display: flex; align-items: center; }
.first .inp { height: 27px; margin-bottom: 6px; padding-bottom: 2px; border-bottom-color: #c4c4c4; }
.dd { width: 430px; justify-content: space-between; padding-right: 8px; }
.kor { letter-spacing: 0.35px; }
.dd svg { color: #888; }
.d-scroll { flex: 1; background: #f2f2f2; padding: 229px 0 0 2px; }
.d-scroll i { display: block; width: 4px; height: 223px; border-radius: 2px; background: #a8a8a8; }
.d-run { height: 29px; border-top: 4px solid #6d9a35; border-bottom: 1px solid #ccc; display: flex; align-items: center; padding-left: 11px; font-size: 12px; color: #666; }
.d-run svg { color: #6d9a35; margin-right: 4px; }
.d-foot { flex: 1; display: flex; align-items: center; padding: 0 12px 0 12px; font-size: 12.500px; color: #666; }
.d-foot span { flex: 1; }
button { font: inherit; letter-spacing: inherit; height: 24px; padding: 0; border-radius: 2px; }
.back { width: 53px; background: #fff; border: 1px solid #aaa; color: #444; margin-right: 8px; }
.run { width: 48px; background: #0f96d6; border: 1px solid #0f96d6; color: #fff; box-shadow: 0 0 0 1.500px #a9d8f0; font-weight: 600; }
```
